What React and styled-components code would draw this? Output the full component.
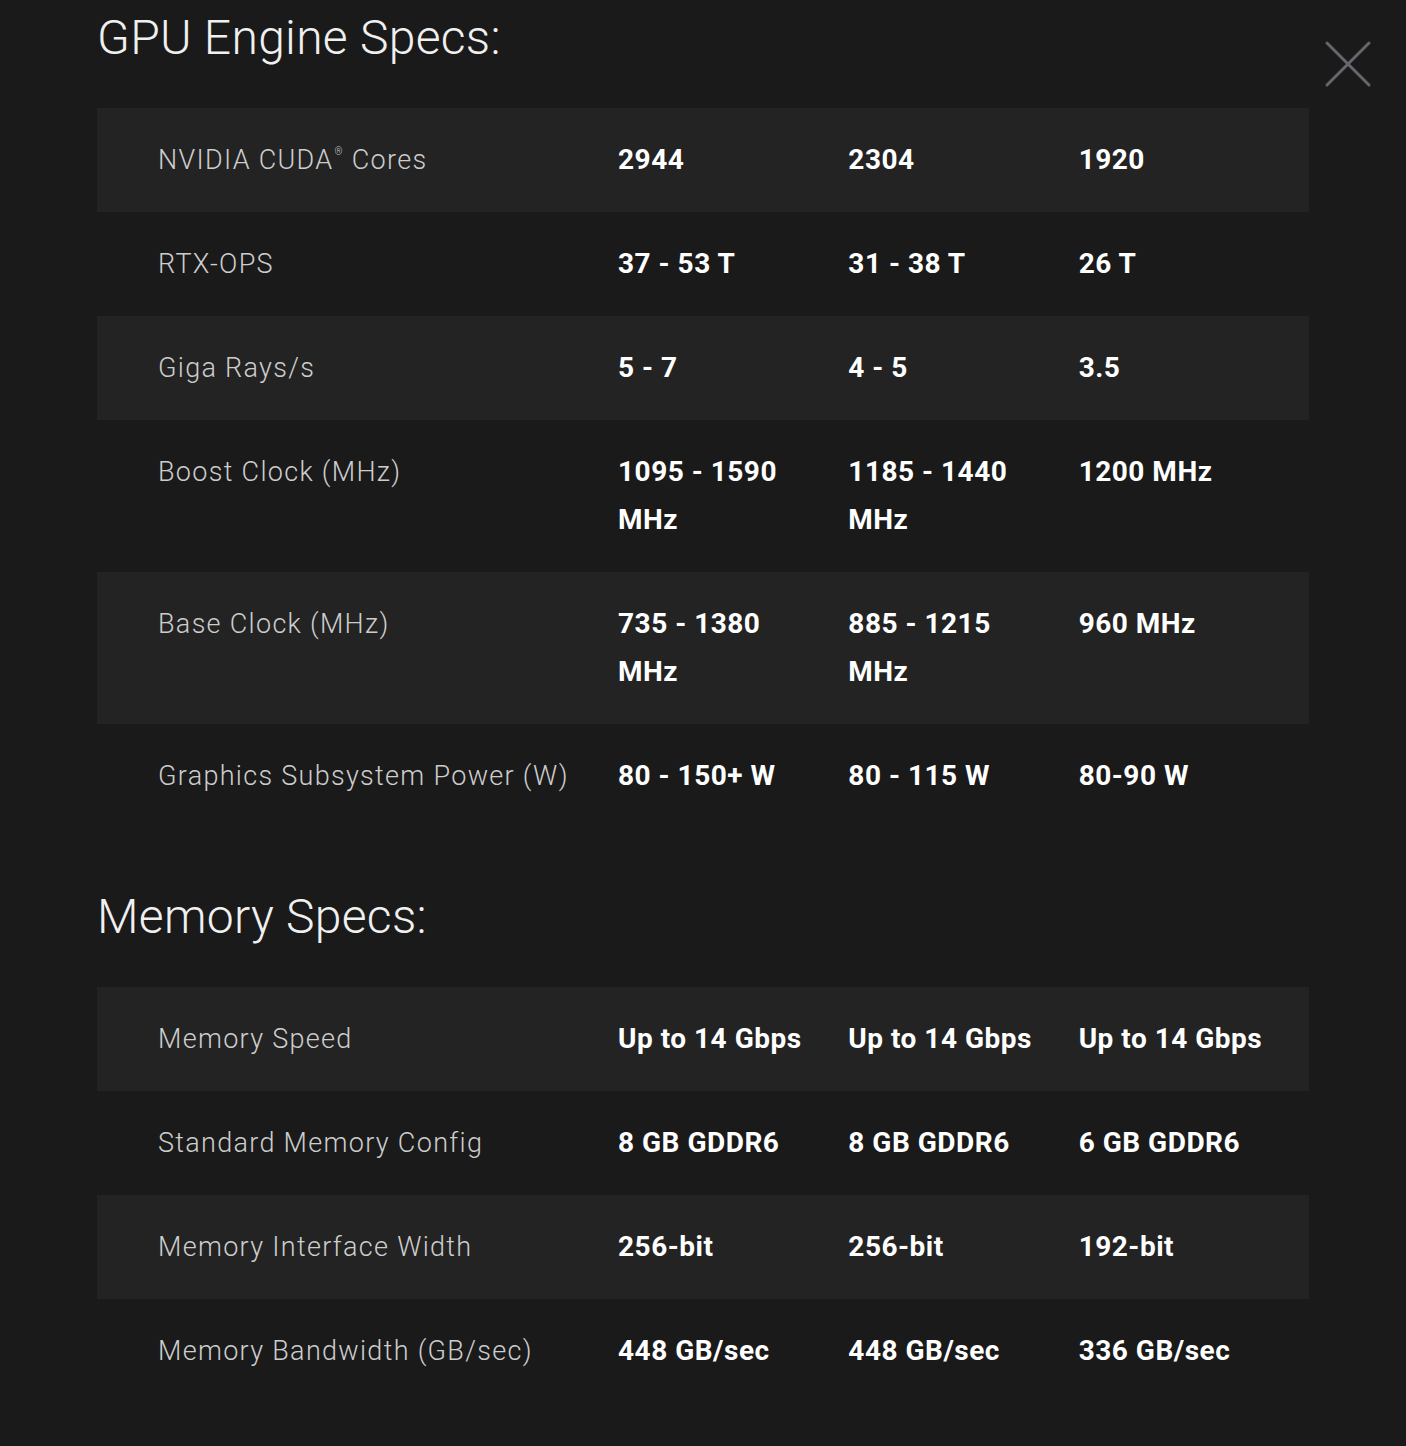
import React from "react";
import styled, { createGlobalStyle } from "styled-components";

const Global = createGlobalStyle`
  html, body { margin: 0; padding: 0; background: #1a1a1a; }
  body { font-family: Roboto, "Liberation Sans", sans-serif; -webkit-font-smoothing: antialiased; }
`;

const Page = styled.div`
  position: relative;
  min-height: 1446px;
  padding: 8px 0 40px 97px;
  box-sizing: border-box;
`;

const Close = styled.button`
  position: absolute;
  top: 40px;
  right: 34px;
  width: 48px;
  height: 48px;
  padding: 0;
  border: 0;
  background: transparent;
  cursor: pointer;
  display: flex;
  align-items: center;
  justify-content: center;
`;

const Section = styled.section`
  width: 1212px;
  margin-top: ${(p) => p.$top || 0}px;
`;

const Heading = styled.h2`
  margin: 0 0 40px;
  font-family: Roboto, "Liberation Sans", sans-serif;
  font-weight: 300;
  font-size: 48px;
  line-height: 60px;
  letter-spacing: 0.3px;
  color: #f0f0f0;
`;

const Table = styled.div`
  display: flex;
  flex-direction: column;
`;

const Row = styled.div`
  display: grid;
  grid-template-columns: 460px repeat(3, 1fr);
  padding: 28px 0 28px 61px;
  background: ${(p) => (p.$shade ? "#232323" : "transparent")};
`;

const Label = styled.div`
  font-family: Roboto, "Liberation Sans", sans-serif;
  font-weight: 300;
  font-size: 27px;
  line-height: 48px;
  letter-spacing: 1.3px;
  color: #cdcdcd;
  sup {
    font-size: 10px;
    line-height: 0;
    vertical-align: 14px;
    margin-left: 1px;
  }
`;

const Value = styled.div`
  font-family: Roboto, "Liberation Sans", sans-serif;
  font-weight: 700;
  font-size: 28px;
  line-height: 48px;
  letter-spacing: 0.5px;
  color: #ffffff;
  max-width: 200px;
`;

const gpu = [
  [<>NVIDIA CUDA<sup>®</sup> Cores</>, "2944", "2304", "1920"],
  ["RTX-OPS", "37 - 53 T", "31 - 38 T", "26 T"],
  ["Giga Rays/s", "5 - 7", "4 - 5", "3.5"],
  ["Boost Clock (MHz)", "1095 - 1590 MHz", "1185 - 1440 MHz", "1200 MHz"],
  ["Base Clock (MHz)", "735 - 1380 MHz", "885 - 1215 MHz", "960 MHz"],
  ["Graphics Subsystem Power (W)", "80 - 150+ W", "80 - 115 W", "80-90 W"],
];

const mem = [
  ["Memory Speed", "Up to 14 Gbps", "Up to 14 Gbps", "Up to 14 Gbps"],
  ["Standard Memory Config", "8 GB GDDR6", "8 GB GDDR6", "6 GB GDDR6"],
  ["Memory Interface Width", "256-bit", "256-bit", "192-bit"],
  ["Memory Bandwidth (GB/sec)", "448 GB/sec", "448 GB/sec", "336 GB/sec"],
];

function SpecTable({ rows }) {
  return (
    <Table>
      {rows.map((r, i) => (
        <Row key={i} $shade={i % 2 === 0}>
          <Label>{r[0]}</Label>
          {r.slice(1).map((v, j) => (
            <Value key={j}>{v}</Value>
          ))}
        </Row>
      ))}
    </Table>
  );
}

export default function App() {
  return (
    <>
      <Global />
      <Page>
        <Close aria-label="Close">
          <svg width="48" height="48" viewBox="0 0 48 48">
            <path d="M3 3 L45 45 M45 3 L3 45" stroke="#66666f" strokeWidth="3" strokeLinecap="round" fill="none" />
          </svg>
        </Close>
        <Section>
          <Heading>GPU Engine Specs:</Heading>
          <SpecTable rows={gpu} />
        </Section>
        <Section $top={59}>
          <Heading>Memory Specs:</Heading>
          <SpecTable rows={mem} />
        </Section>
      </Page>
    </>
  );
}
